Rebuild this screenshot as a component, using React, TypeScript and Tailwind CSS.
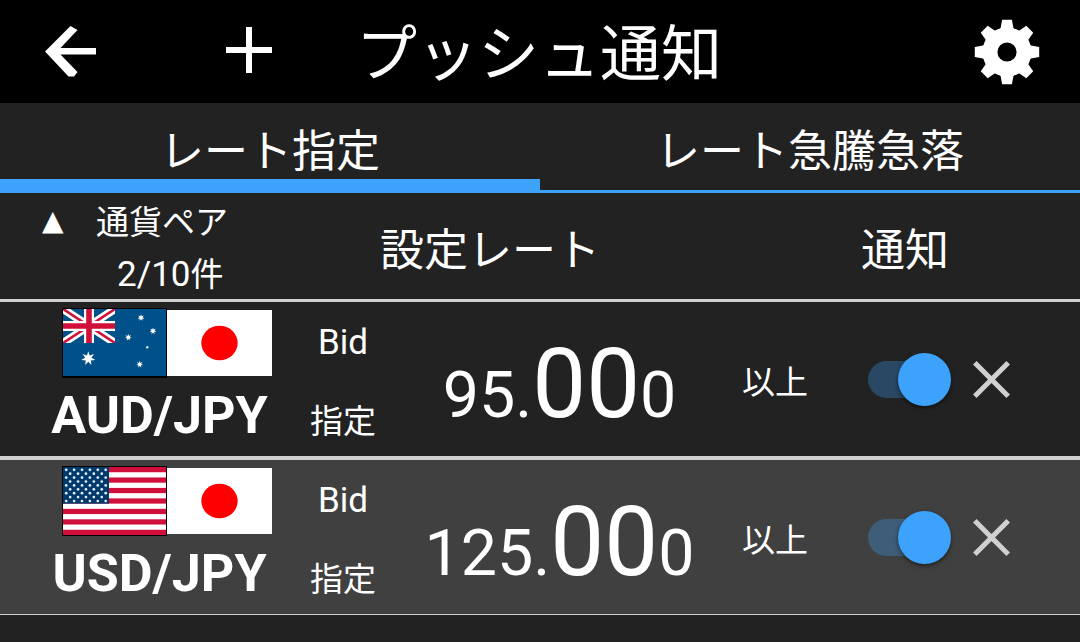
type Currency = "AUD" | "USD" | "JPY";

interface RateAlert {
  base: Currency;
  quote: Currency;
  rate: { head: string; pips: string; tail: string };
  condition: string;
  enabled: boolean;
}

const MAX_ALERTS = 10;

const ALERTS: RateAlert[] = [
  { base: "AUD", quote: "JPY", rate: { head: "95.", pips: "00", tail: "0" }, condition: "以上", enabled: true },
  { base: "USD", quote: "JPY", rate: { head: "125.", pips: "00", tail: "0" }, condition: "以上", enabled: true },
];

const TABS = ["レート指定", "レート急騰急落"];

function BackIcon() {
  return (
    <svg className="h-[52px] w-[52px]" viewBox="0 0 52 52" fill="#fff">
      <path d="M0 25.5 25.5 0 32.5 4 15.5 22H51V28.5H15.5L32.5 46 29 50.5H23.5Z" />
    </svg>
  );
}

function GearIcon() {
  return (
    <svg className="h-[66px] w-[66px]" viewBox="-33 -33 66 66" fill="#fff">
      <path
        fillRule="evenodd"
        d="M0-24.5A24.5 24.5 0 1 1 0 24.5 24.5 24.5 0 1 1 0-24.5ZM0-9.6A9.6 9.6 0 1 0 0 9.6 9.6 9.6 0 1 0 0-9.6Z"
      />
      {[0, 45, 90, 135, 180, 225, 270, 315].map((deg) => (
        <path key={deg} transform={`rotate(${deg})`} d="M-4.9-32.2H4.9L6.4-24 9-21H-9L-6.4-24Z" />
      ))}
    </svg>
  );
}

function Star({ x, y, r }: { x: number; y: number; r: number }) {
  const points = Array.from({ length: 14 }, (_, i) => {
    const a = (i * Math.PI) / 7 - Math.PI / 2;
    const d = i % 2 ? r * 0.45 : r;
    return `${x + d * Math.cos(a)},${y + d * Math.sin(a)}`;
  }).join(" ");
  return <polygon points={points} fill="#fff" />;
}

function AustraliaFlag() {
  return (
    <svg className="block h-[70px] w-[105px]" viewBox="0 0 105 70">
      <rect width="105" height="70" fill="#000" />
      <rect x="1" y="1" width="103" height="67" fill="#00508a" />
      <svg x="1" y="1" width="52" height="34" viewBox="0 0 52 34">
        <path d="M0 0 52 34M52 0 0 34" stroke="#fff" strokeWidth="8" />
        <path d="M0 0 52 34M52 0 0 34" stroke="#d0103a" strokeWidth="2.6" />
        <path d="M26 0V34M0 17H52" stroke="#fff" strokeWidth="10" />
        <path d="M26 0V34M0 17H52" stroke="#d0103a" strokeWidth="5.6" />
      </svg>
      <Star x={26.3} y={50.5} r={7.2} />
      <Star x={79} y={9.7} r={3.5} />
      <Star x={91} y={23} r={3.5} />
      <Star x={66.3} y={29.3} r={3.5} />
      <Star x={85.3} y={39.3} r={1.8} />
      <Star x={77.7} y={56.3} r={3.5} />
    </svg>
  );
}

function UsaFlag() {
  const stripe = 68 / 13;
  return (
    <svg className="block h-[70px] w-[105px]" viewBox="0 0 105 70">
      <rect width="105" height="70" fill="#000" />
      <rect x="1" y="1" width="103" height="68" fill="#fff" />
      {[0, 2, 4, 6, 8, 10, 12].map((i) => (
        <rect key={i} x="1" y={1 + i * stripe} width="103" height={stripe} fill="#d0103a" />
      ))}
      <rect x="1" y="1" width="46" height={stripe * 7} fill="#00396b" />
      {Array.from({ length: 9 }, (_, row) =>
        Array.from({ length: row % 2 ? 5 : 6 }, (_, col) => (
          <circle
            key={`${row}-${col}`}
            cx={4.2 + col * 7.9 + (row % 2 ? 3.95 : 0)}
            cy={3.8 + row * 3.9}
            r="1.35"
            fill="#e4f1ff"
          />
        )),
      )}
    </svg>
  );
}

function JapanFlag() {
  return (
    <svg className="block h-[70px] w-[105px]" viewBox="0 0 105 70">
      <rect x="0" y="2" width="105" height="66" fill="#fff" />
      <ellipse cx="52.5" cy="35" rx="18.2" ry="17.2" fill="#f00" />
    </svg>
  );
}

function Flag({ currency }: { currency: Currency }) {
  if (currency === "AUD") return <AustraliaFlag />;
  if (currency === "USD") return <UsaFlag />;
  return <JapanFlag />;
}

function Switch({ on }: { on: boolean }) {
  return (
    <button role="switch" aria-checked={on} className="flex h-[54px] w-[84px] items-center">
      <span className="flex h-[37px] w-[74px] items-center justify-end rounded-full bg-[#3ca2fc]/30">
        <span className="-mr-[9px] h-[53px] w-[53px] shrink-0 rounded-full bg-[#3ca2fc] shadow-[0_2px_4px_rgba(0,0,0,0.5)]" />
      </span>
    </button>
  );
}

function AlertRow({ alert }: { alert: RateAlert }) {
  return (
    <div className="flex h-[158px] border-b-4 border-[#d0d0d0] bg-[#222] last:h-[155px] last:border-b last:bg-[#404040]">
      <div className="flex w-[300px] flex-col pt-[6px] pl-[62px]">
        <div className="flex">
          <Flag currency={alert.base} />
          <Flag currency={alert.quote} />
        </div>
        <div className="-ml-[62px] w-[319px] pt-[8px] text-center text-[52px] leading-[60px] font-bold">
          {alert.base}/{alert.quote}
        </div>
      </div>
      <div className="flex w-[86px] flex-col items-center pt-[21px] text-[35px] leading-[40px]">
        <span>Bid</span>
        <span className="pt-[39px] text-[33px]">指定</span>
      </div>
      <div className="flex w-[347px] items-baseline justify-center pt-[26px] text-[64.5px] leading-[112px]">
        <span>{alert.rate.head}</span>
        <span className="text-[96px]">{alert.rate.pips}</span>
        <span>{alert.rate.tail}</span>
      </div>
      <div className="flex w-[135px] items-center pt-[7px] pl-[9px] text-[33px]">{alert.condition}</div>
      <div className="flex items-center">
        <Switch on={alert.enabled} />
        <svg className="ml-[21px] h-[37px] w-[37px]" viewBox="0 0 37 37" stroke="#d0d0d0" strokeWidth="5">
          <path d="M1.8 1.8 35.2 35.2M35.2 1.8 1.8 35.2" />
        </svg>
      </div>
    </div>
  );
}

export default function App() {
  return (
    <div className="h-[642px] w-[1080px] overflow-hidden bg-[#222] font-[Roboto,'Noto_Sans_CJK_JP',sans-serif] text-white">
      <header className="flex h-[103px] items-center bg-black pl-[45px]">
        <BackIcon />
        <svg className="mb-[3px] ml-[129px] h-[46px] w-[46px]" viewBox="0 0 46 46" stroke="#fff" strokeWidth="6">
          <path d="M23 0V46M0 23H46" />
        </svg>
        <h1 className="ml-[84px] w-[366px] pt-[7px] text-[61px] leading-[80px] whitespace-nowrap">プッシュ通知</h1>
        <div className="ml-[252px]">
          <GearIcon />
        </div>
      </header>

      <nav className="flex h-[90px]">
        {TABS.map((label, i) => (
          <button
            key={label}
            className={`w-1/2 border-[#3ca2fc] pt-[22px] text-center text-[44px] leading-[54px] ${
              i === 0 ? "border-b-[14px]" : "border-b-[3px] pb-[11px]"
            }`}
          >
            {label}
          </button>
        ))}
      </nav>

      <div className="flex h-[109px] border-b-[3px] border-[#d0d0d0]">
        <div className="w-[380px] text-[33px]">
          <div className="flex h-[54px] items-center">
            <span className="mt-[1px] ml-[42px] w-[54px] font-['DejaVu_Sans'] text-[28px]">▲</span>
            <span className="pt-[5px]">通貨ペア</span>
          </div>
          <div className="pl-[117px] text-[35px] leading-[56px]">
            {ALERTS.length}/{MAX_ALERTS}
            <span className="text-[33px]">件</span>
          </div>
        </div>
        <div className="flex w-[481px] items-center pt-[10px] text-[44px]">設定レート</div>
        <div className="flex items-center pt-[10px] text-[44px]">通知</div>
      </div>

      <div>
        {ALERTS.map((alert) => (
          <AlertRow key={`${alert.base}${alert.quote}`} alert={alert} />
        ))}
      </div>
    </div>
  );
}
